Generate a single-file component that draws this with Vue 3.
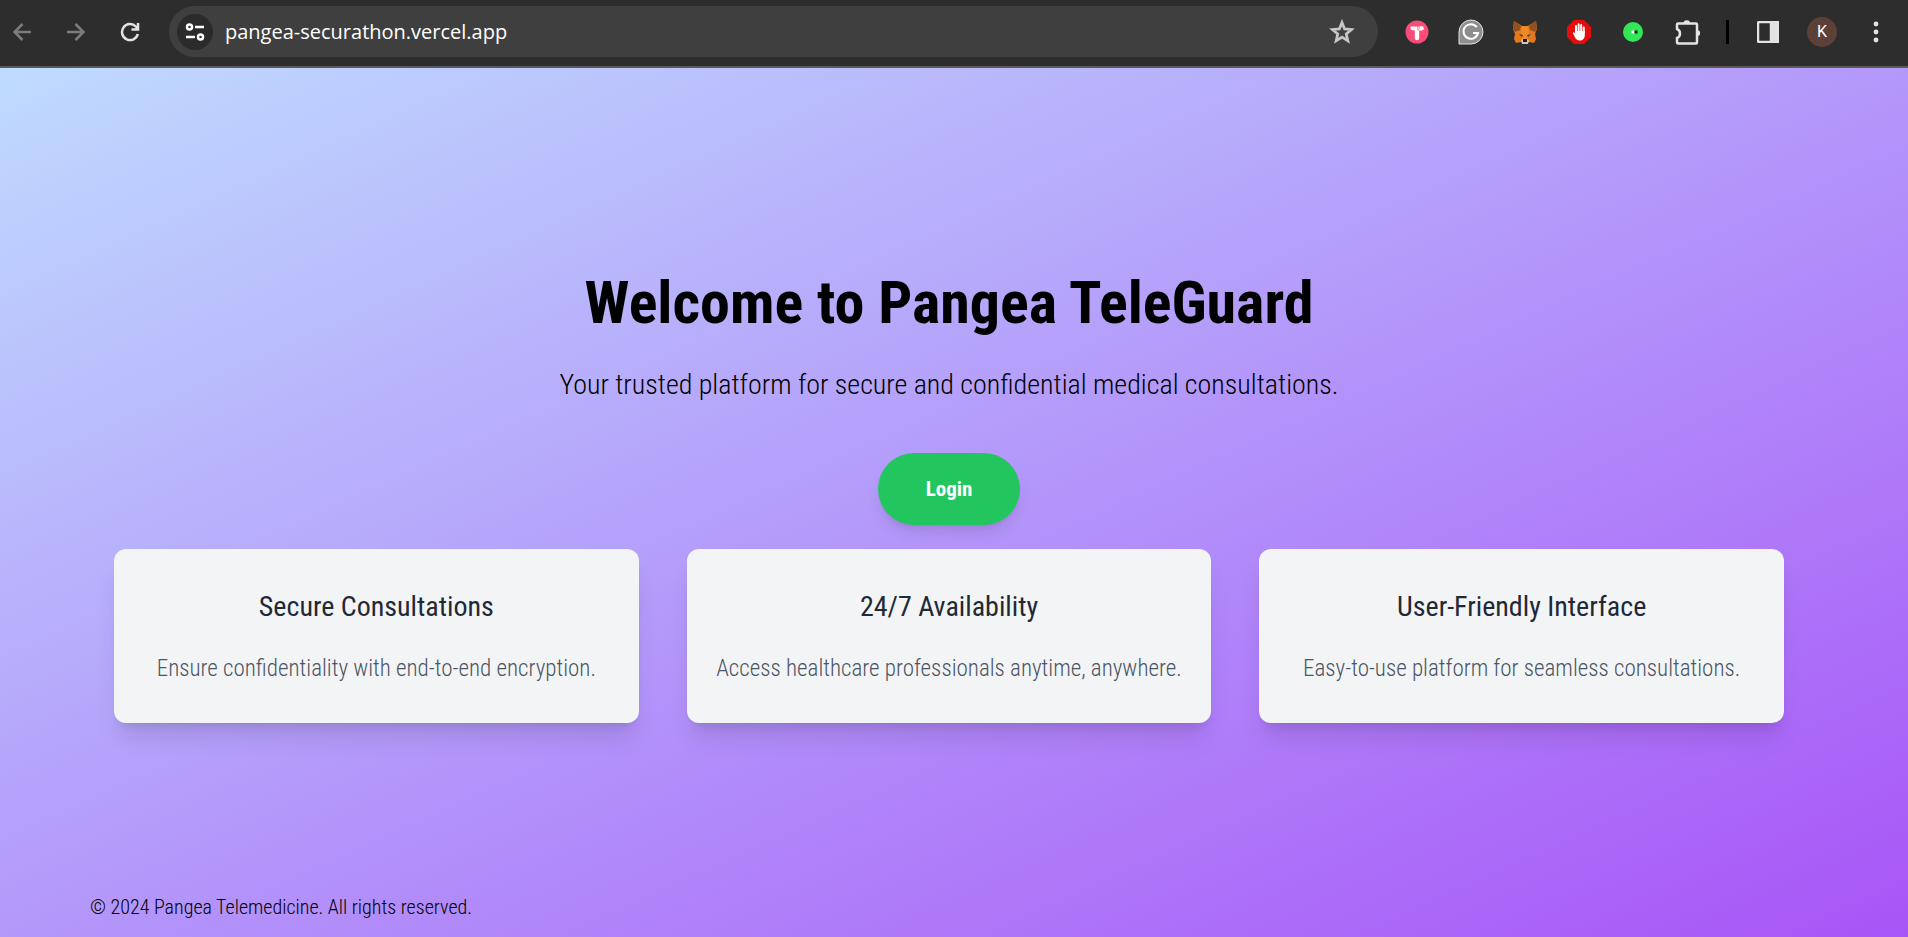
<script setup>
import { ref } from 'vue'

const address = ref('pangea-securathon.vercel.app')

const features = [
  {
    title: 'Secure Consultations',
    text: 'Ensure confidentiality with end-to-end encryption.'
  },
  {
    title: '24/7 Availability',
    text: 'Access healthcare professionals anytime, anywhere.'
  },
  {
    title: 'User-Friendly Interface',
    text: 'Easy-to-use platform for seamless consultations.'
  }
]
</script>

<template>
  <div class="window">
    <header class="toolbar">
      <nav class="nav-buttons" aria-label="History">
        <button type="button" class="icon-btn dim" aria-label="Back">
          <svg viewBox="0 0 20 20" width="20" height="20"><path d="M19 10H3M10.500 2L2.500 10l8 8" /></svg>
        </button>
        <button type="button" class="icon-btn dim" aria-label="Forward">
          <svg viewBox="0 0 20 20" width="20" height="20"><path d="M1 10h16M9.500 2l8 8-8 8" /></svg>
        </button>
        <button type="button" class="icon-btn" aria-label="Reload">
          <svg viewBox="0 0 20 20" width="20" height="20">
            <path d="M17.800 12A8 8 0 1 1 15.800 4.500L17.500 6.500" />
            <path d="M18 1v6.600h-6.500" />
          </svg>
        </button>
      </nav>

      <div class="address-bar">
        <button type="button" class="site-info" aria-label="View site information">
          <svg viewBox="0 0 20 18" width="20" height="18">
            <circle cx="4.5" cy="4" r="2.5" />
            <path d="M10 4h9M1 14h9" />
            <circle cx="15.5" cy="14" r="2.5" />
          </svg>
        </button>
        <input v-model="address" type="text" class="address" aria-label="Address" spellcheck="false">
        <button type="button" class="icon-btn star" aria-label="Bookmark this page">
          <svg viewBox="0 0 24 24" width="26" height="26">
            <path d="M12 3.200l2.400 6 6.400.5-4.900 4.200 1.500 6.300L12 16.800l-5.400 3.400 1.500-6.300-4.900-4.200 6.400-.5z" />
          </svg>
        </button>
      </div>

      <div class="extensions">
        <button type="button" class="icon-btn" aria-label="T extension">
          <svg class="filled" viewBox="0 0 24 24" width="24" height="24">
            <circle cx="12" cy="12" r="11.500" fill="#fb4b78" />
            <path d="M5.500 6.500h7v3.800h1.700V18a2.200 2.200 0 0 1-4.400 0v-7.700H7.500a2 2 0 0 1-2-2z" fill="#fff" />
            <rect x="12.800" y="6.200" width="6" height="4.200" rx="2" fill="#fff" />
            <path d="M14.800 7.200l-1.400 2.300" stroke="#fb4b78" />
          </svg>
        </button>
        <button type="button" class="icon-btn" aria-label="Grammar extension">
          <svg class="filled" viewBox="0 0 26 26" width="26" height="26">
            <path d="M13 1A12 12 0 1 1 13 25H1V13A12 12 0 0 1 13 1z" fill="#8e8e8e" stroke="#e2e2e2" />
            <path d="M18.800 8.200A7.300 7.300 0 1 0 20 14h-5" fill="none" stroke="#fff" stroke-width="2" />
          </svg>
        </button>
        <button type="button" class="icon-btn" aria-label="Wallet extension">
          <svg class="filled" viewBox="0 0 26 24" width="26" height="24">
            <path d="M2 1l8 5h6l8-5 1 8-2 5 1 5-2 4-5-1-2 2h-4l-2-2-5 1-2-4 1-5-2-5z" fill="#e27a1c" />
            <path d="M2 1l7 5-1 4-5 2-2-3zM24 1l-7 5 1 4 5 2 2-3z" fill="#92501f" />
            <path d="M10 6h6l1 9-2 4h-4l-2-4z" fill="#f08a26" />
            <path d="M7 14l4 1-1 2zM19 14l-4 1 1 2z" fill="#3b3a3c" />
            <path d="M9 20l2-1h4l2 1-1 4h-6z" fill="#d5c7bb" />
            <path d="M11 19h4v3h-4z" fill="#1c1c1c" />
          </svg>
        </button>
        <button type="button" class="icon-btn" aria-label="Ad blocker extension">
          <svg class="filled" viewBox="0 0 24 24" width="24" height="24">
            <path d="M7 0h10l7 7v10l-7 7H7l-7-7V7z" fill="#e80c0c" />
            <path d="M9 12V6M11.600 12V4.200M14.200 12V5M16.800 13V7.500" stroke="#fff" stroke-width="2" stroke-linecap="round" />
            <path d="M8 11h9.800v4c0 3.500-2 5.500-5 5.500-2.600 0-4-1.500-5-3.500l-2-4c.2-1 1.400-1 2.200 0z" fill="#fff" />
          </svg>
        </button>
        <button type="button" class="icon-btn" aria-label="Green extension">
          <svg class="filled" viewBox="0 0 20 20" width="20" height="20">
            <circle cx="10" cy="10" r="10" fill="#33e657" />
            <path d="M8.500 8.500h3v3h-3z" fill="#fff" />
            <path d="M11.500 8.500h3v3h-3z" fill="#10240f" />
          </svg>
        </button>
        <button type="button" class="icon-btn" aria-label="Extensions">
          <svg viewBox="0 0 26 26" width="26" height="26">
            <path d="M4 4.500H22a1 1 0 0 1 1 1V23.500a1 1 0 0 1-1 1H4a1 1 0 0 1-1-1v-4.500c1.800-.8 3-2.500 3-4.500s-1.200-3.700-3-4.500V5.500a1 1 0 0 1 1-1z" />
            <path d="M9.500 4.500a3.300 3.300 0 0 1 6.600 0zM23 11a3.200 3.200 0 0 1 0 6.400z" fill="currentColor" stroke="none" />
          </svg>
        </button>
        <span class="divider"></span>
        <button type="button" class="icon-btn" aria-label="Side panel">
          <svg viewBox="0 0 22 22" width="22" height="22">
            <rect x="1" y="1" width="20" height="20" rx="1.500" />
            <path d="M14 1h7v20h-7z" fill="currentColor" />
          </svg>
        </button>
        <button type="button" class="avatar" aria-label="Profile">K</button>
        <button type="button" class="icon-btn" aria-label="Menu">
          <svg class="filled" viewBox="0 0 6 22" width="6" height="22">
            <circle v-for="y in [3, 11, 19]" :key="y" cx="3" :cy="y" r="2.400" fill="#e3e3e3" />
          </svg>
        </button>
      </div>
    </header>

    <div class="page">
      <main class="hero">
        <h1>Welcome to Pangea TeleGuard</h1>
        <p class="tagline">Your trusted platform for secure and confidential medical consultations.</p>
        <button type="button" class="login">Login</button>
        <section class="features">
          <article v-for="feature in features" :key="feature.title" class="card">
            <h2>{{ feature.title }}</h2>
            <p>{{ feature.text }}</p>
          </article>
        </section>
      </main>
      <footer class="footer">© 2024 Pangea Telemedicine. All rights reserved.</footer>
    </div>
  </div>
</template>

<style>
body {
  margin: 0;
}
</style>

<style scoped>
.window {
  display: flex;
  flex-direction: column;
  min-height: 100vh;
  font-family: "Roboto Condensed", Roboto, sans-serif;
  font-weight: 300;
}

button {
  border: none;
  padding: 0;
  cursor: pointer;
  font-family: inherit;
}

.toolbar {
  box-sizing: border-box;
  display: flex;
  align-items: center;
  height: 68px;
  padding: 0 19px 3px 12px;
  background: #2d2d2d;
  border-bottom: 2px solid #5c5a58;
}

.nav-buttons {
  display: flex;
  gap: 34px;
}

.icon-btn {
  display: flex;
  justify-content: center;
  background: none;
  color: #e3e3e3;
}

.icon-btn.dim {
  color: #7c7c7c;
}

.icon-btn svg,
.site-info svg {
  display: block;
  fill: none;
  stroke: currentColor;
  stroke-width: 2.5;
}

.icon-btn svg.filled {
  stroke: none;
  stroke-width: 1;
}

.address-bar {
  flex: 1;
  display: flex;
  align-items: center;
  box-sizing: border-box;
  height: 51px;
  margin-left: 29px;
  padding: 0 23px 0 8px;
  border-radius: 26px;
  background: #3f3f3f;
}

.site-info {
  display: flex;
  align-items: center;
  justify-content: center;
  width: 36px;
  height: 36px;
  border-radius: 50%;
  background: #2b2b2b;
  color: #fff;
}

.address {
  flex: 1;
  min-width: 0;
  margin-left: 12px;
  padding: 0;
  border: none;
  outline: none;
  background: none;
  color: #fff;
  font: 20px/28px "Open Sans", "Noto Sans", sans-serif;
}

.icon-btn.star {
  color: #c7c7c7;
}

.extensions {
  display: flex;
  align-items: center;
  gap: 28px;
  margin-left: 26px;
}

.extensions .icon-btn {
  width: 26px;
}

.divider {
  width: 3px;
  height: 24px;
  margin: 0 -2px;
  background: #000;
}

.avatar {
  width: 30px;
  height: 30px;
  margin: 0 -2px;
  border-radius: 50%;
  background: #5d4037;
  color: #fff;
  font: 16px/30px Roboto, sans-serif;
}

.page {
  flex: 1;
  display: flex;
  flex-direction: column;
  padding: 0 100px 0 90px;
  background: linear-gradient(to bottom right, #bfdbfe, #a855f7);
  color: #000;
}

.hero {
  flex: 1;
  display: flex;
  flex-direction: column;
  align-items: center;
  justify-content: center;
  padding: 44px 24px 0;
}

h1 {
  margin: 0;
  font-size: 60px;
  line-height: 72px;
  font-weight: 700;
}

.tagline {
  margin: 28px 0 50px;
  font-size: 28px;
  line-height: 36px;
}

.login {
  padding: 20px 48px;
  border-radius: 36px;
  background: #22c55e;
  color: #fff;
  font-size: 21px;
  line-height: 32px;
  font-weight: 700;
  box-shadow: 0 10px 15px -3px rgba(0, 0, 0, 0.1), 0 4px 6px -4px rgba(0, 0, 0, 0.1);
}

.features {
  display: grid;
  grid-template-columns: repeat(3, 1fr);
  gap: 48px;
  align-self: stretch;
  margin-top: 24px;
}

.card {
  padding: 40px 24px 38px;
  border-radius: 12px;
  background: #f3f4f6;
  text-align: center;
  box-shadow: 0 20px 25px -5px rgba(0, 0, 0, 0.1), 0 8px 10px -6px rgba(0, 0, 0, 0.1);
}

.card h2 {
  margin: 0 0 28px;
  color: #1f2937;
  font-size: 28px;
  line-height: 36px;
  font-weight: 400;
}

.card p {
  margin: 0;
  color: #4b5563;
  font-size: 23px;
  line-height: 32px;
}

.footer {
  padding: 16px 0;
  font-size: 20px;
  line-height: 28px;
}
</style>
